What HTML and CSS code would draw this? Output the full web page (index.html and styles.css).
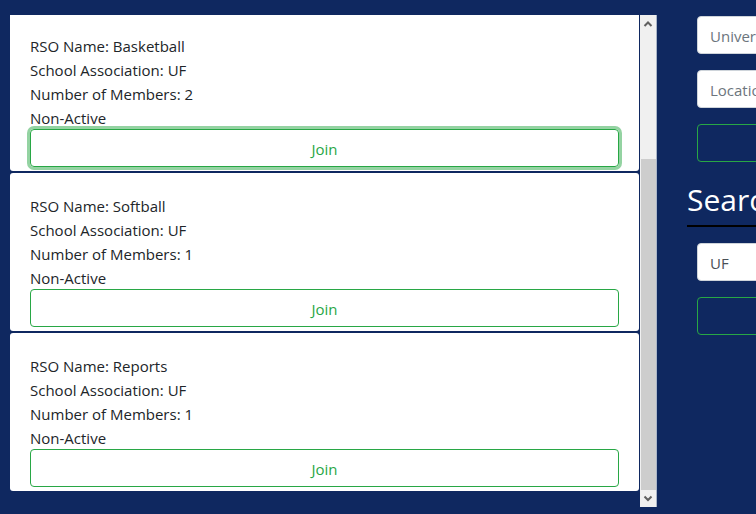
FILE: index.html
```
<!DOCTYPE html>
<html lang="en">
<head>
<meta charset="utf-8">
<title>RSOs</title>
<link rel="stylesheet" href="styles.css">
</head>
<body>
<div class="page">
  <main class="panel">
    <div class="list">
      <article class="card">
        <p>RSO Name: Basketball</p>
        <p>School Association: UF</p>
        <p>Number of Members: 2</p>
        <p>Non-Active</p>
        <button class="btn btn-active" type="button">Join</button>
      </article>
      <article class="card">
        <p>RSO Name: Softball</p>
        <p>School Association: UF</p>
        <p>Number of Members: 1</p>
        <p>Non-Active</p>
        <button class="btn" type="button">Join</button>
      </article>
      <article class="card">
        <p>RSO Name: Reports</p>
        <p>School Association: UF</p>
        <p>Number of Members: 1</p>
        <p>Non-Active</p>
        <button class="btn" type="button">Join</button>
      </article>
    </div>
    <div class="scrollbar" aria-hidden="true">
      <svg class="arrow" viewBox="0 0 16 17"><path d="M4.500 11 L8 7.500 L11.500 11"/></svg>
      <div class="track"><div class="thumb"></div></div>
      <svg class="arrow" viewBox="0 0 16 17"><path d="M4.500 6.500 L8 10 L11.500 6.500"/></svg>
    </div>
  </main>
  <aside class="side">
    <form class="fields">
      <input class="field" type="text" placeholder="University" aria-label="University">
      <input class="field" type="text" placeholder="Location" aria-label="Location">
      <button class="btn" type="button" aria-label="Create"></button>
    </form>
    <h2>Search</h2>
    <form class="fields">
      <input class="field" type="text" value="UF" aria-label="School">
      <button class="btn" type="button" aria-label="Search"></button>
    </form>
  </aside>
</div>
</body>
</html>
```
FILE: styles.css
```
* { box-sizing: border-box; }

html { background: #0f2860; }

body {
  margin: 0;
  overflow: hidden;
  font-family: "Segoe UI", "Open Sans", "Noto Sans", sans-serif;
  font-size: 15px;
  line-height: 24px;
  color: #212529;
}

/* The side column runs past the right edge of the window. */
.page {
  display: grid;
  grid-template-columns: minmax(0, 1fr) 300px;
  column-gap: 30px;
  align-items: start;
  width: calc(100% + 231px);
  padding: 15px 0 7px 10px;
}

.panel {
  display: flex;
  gap: 1px;
}

.list {
  flex: 1;
  display: flex;
  flex-direction: column;
  gap: 2px;
  padding-bottom: 16px;
}

.card {
  display: grid;
  grid-template-rows: repeat(4, 24px) 37px;
  padding: 21px 20px 4px;
  background: #fff;
  border-radius: 3px;
}

.card:first-child {
  padding-top: 19px;
  border-radius: 0 0 3px 3px;
}

.card p { margin: 0; }

.card .btn { align-self: end; }

.btn {
  display: block;
  width: 100%;
  height: 38px;
  padding: 7px 12px 5px;
  font: inherit;
  line-height: 24px;
  color: #28a745;
  background: transparent;
  border: 1px solid #28a745;
  border-radius: 4px;
}

.btn-active { box-shadow: 0 0 0 3px #94d3a2; }

.scrollbar {
  flex: 0 0 17px;
  display: flex;
  flex-direction: column;
  background: #f0f0f0;
  border-right: 1px solid #a9b5c8;
}

.arrow {
  width: 16px;
  height: 17px;
  fill: none;
  stroke: #606060;
  stroke-width: 2;
}

.track {
  flex: 1;
  display: flex;
  flex-direction: column;
  padding-left: 1px;
}

.track::before {
  content: "";
  flex: 127;
}

.thumb {
  flex: 331;
  background: #cdcdcd;
}

.fields {
  display: flex;
  flex-direction: column;
  gap: 16px;
  padding: 1px 10px 0;
}

.field {
  width: 100%;
  height: 38px;
  padding: 7px 12px 5px;
  font: inherit;
  color: #495057;
  background: #fff;
  border: 1px solid #ced4da;
  border-radius: 4px;
}

.field::placeholder {
  color: #6c757d;
  opacity: 1;
}

h2 {
  margin: 18px 0 15px;
  padding-bottom: 5px;
  border-bottom: 2px solid #000;
  font-size: 30px;
  font-weight: 400;
  line-height: 40px;
  color: #fff;
}
```
